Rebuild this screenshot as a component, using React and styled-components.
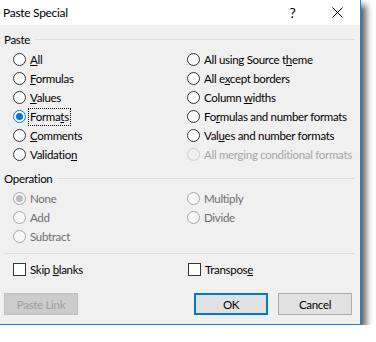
import React from "react";
import styled, { createGlobalStyle, css } from "styled-components";

const GlobalStyle = createGlobalStyle`
  html, body {
    margin: 0;
    padding: 0;
    background: #ffffff;
  }
  body {
    font-family: Lato, "Liberation Sans", sans-serif;
    font-size: 11.5px;
    letter-spacing: -0.3px;
    color: #000;
  }
`;

const Dialog = styled.div`
  width: 360px;
  height: 324px;
  display: flex;
  flex-direction: column;
  background: #f0f0f0;
  border-right: 1px solid #1883d7;
  border-bottom: 1px solid #1883d7;
  box-shadow: 5px 5px 7px rgba(0, 0, 0, 0.65);
`;

const TitleBar = styled.div`
  height: 25px;
  display: flex;
  align-items: center;
  background: #ffffff;
  padding-left: 3px;
`;

const Title = styled.div`
  flex: 1;
  font-size: 12px;
  line-height: 25px;
`;

const TitleButton = styled.div`
  width: 45px;
  height: 25px;
  display: flex;
  align-items: center;
  justify-content: center;
  font-size: 14px;
`;

const Body = styled.div`
  flex: 1;
  display: flex;
  flex-direction: column;
  padding: 6px 6px 0 4px;
`;

const Legend = styled.div`
  display: flex;
  align-items: center;
  height: 16px;
  gap: 5px;
  margin-top: ${(p) => p.$top || 0}px;
  &::after {
    content: "";
    flex: 1;
    height: 1px;
    background: #dcdcdc;
  }
`;

const Grid = styled.div`
  display: grid;
  grid-template-columns: 174px 1fr;
  grid-auto-rows: 19px;
  padding-left: 9px;
  margin-top: 3px;
`;

const Option = styled.label`
  display: flex;
  align-items: center;
  gap: 4px;
  white-space: nowrap;
  color: ${(p) => (p.$disabled ? "#a6a6a6" : p.$muted ? "#6d6d6d" : "#000")};
`;

const Circle = styled.span`
  box-sizing: border-box;
  width: 13px;
  height: 13px;
  border-radius: 50%;
  flex: none;
  display: flex;
  align-items: center;
  justify-content: center;
  background: #ffffff;
  border: 1px solid #333333;
  ${(p) =>
    p.$checked &&
    css`
      border-color: #0078d7;
      &::after {
        content: "";
        width: 7px;
        height: 7px;
        border-radius: 50%;
        background: #0078d7;
      }
    `}
  ${(p) =>
    p.$muted &&
    css`
      border-color: #a8a8a8;
      background: #f7f7f7;
      &::after {
        background: #bcbcbc;
      }
    `}
  ${(p) =>
    p.$disabled &&
    css`
      border-color: #cccccc;
      background: #f0f0f0;
    `}
`;

const Text = styled.span`
  padding: 1px 1px;
  line-height: 14px;
  border: 1px dotted ${(p) => (p.$focus ? "#000" : "transparent")};
  margin-left: -2px;
`;

const Separator = styled.div`
  height: 1px;
  background: #dcdcdc;
  margin: 7px 0 0 0;
`;

const CheckRow = styled.div`
  display: grid;
  grid-template-columns: 175px 1fr;
  height: 19px;
  padding-left: 9px;
  margin-top: 6px;
`;

const Box = styled.span`
  box-sizing: border-box;
  width: 13px;
  height: 13px;
  flex: none;
  background: #ffffff;
  border: 1px solid #333333;
`;

const ButtonRow = styled.div`
  display: flex;
  align-items: center;
  gap: 10px;
  padding-right: 2px;
  margin-top: 14px;
`;

const Button = styled.div`
  box-sizing: border-box;
  width: 74px;
  height: 22px;
  display: flex;
  align-items: center;
  justify-content: center;
  background: #e1e1e1;
  border: 1px solid #adadad;
  ${(p) =>
    p.$default &&
    css`
      border: 2px solid #0078d7;
    `}
  ${(p) =>
    p.$disabled &&
    css`
      background: #cccccc;
      border-color: #bfbfbf;
      color: #a0a0a0;
    `}
`;

const Spacer = styled.div`
  flex: 1;
`;

function Key({ label, k }) {
  if (k == null) return label;
  return (
    <>
      {label.slice(0, k)}
      <u>{label[k]}</u>
      {label.slice(k + 1)}
    </>
  );
}

function Radio({ label, k, checked, focus, muted, disabled }) {
  return (
    <Option $muted={muted} $disabled={disabled}>
      <Circle $checked={checked} $muted={muted} $disabled={disabled} />
      <Text $focus={focus}>
        <Key label={label} k={k} />
      </Text>
    </Option>
  );
}

function Check({ label, k }) {
  return (
    <Option>
      <Box />
      <Text>
        <Key label={label} k={k} />
      </Text>
    </Option>
  );
}

export default function App() {
  return (
    <>
      <GlobalStyle />
      <Dialog>
        <TitleBar>
          <Title>Paste Special</Title>
          <TitleButton>?</TitleButton>
          <TitleButton>
            <svg width="11" height="11" viewBox="0 0 11 11">
              <path d="M0.5 0.5L10.5 10.5M10.5 0.5L0.5 10.5" stroke="#000" strokeWidth="1" />
            </svg>
          </TitleButton>
        </TitleBar>
        <Body>
          <Legend>Paste</Legend>
          <Grid>
            <Radio label="All" k={0} />
            <Radio label="All using Source theme" k={18} />
            <Radio label="Formulas" k={0} />
            <Radio label="All except borders" k={5} />
            <Radio label="Values" k={0} />
            <Radio label="Column widths" k={7} />
            <Radio label="Formats" k={5} checked focus />
            <Radio label="Formulas and number formats" k={2} />
            <Radio label="Comments" k={0} />
            <Radio label="Values and number formats" k={3} />
            <Radio label="Validation" k={9} />
            <Radio label="All merging conditional formats" disabled />
          </Grid>
          <Legend $top={6}>Operation</Legend>
          <Grid>
            <Radio label="None" checked muted />
            <Radio label="Multiply" muted />
            <Radio label="Add" muted />
            <Radio label="Divide" muted />
            <Radio label="Subtract" muted />
          </Grid>
          <Separator />
          <CheckRow>
            <Check label="Skip blanks" k={5} />
            <Check label="Transpose" k={8} />
          </CheckRow>
          <ButtonRow>
            <Button $disabled>Paste Link</Button>
            <Spacer />
            <Button $default>OK</Button>
            <Button>Cancel</Button>
          </ButtonRow>
        </Body>
      </Dialog>
    </>
  );
}
